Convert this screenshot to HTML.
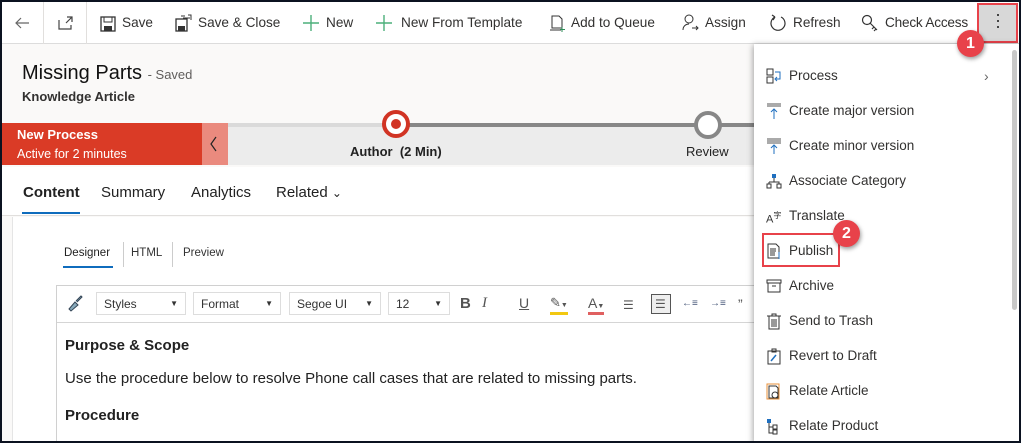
<!DOCTYPE html>
<html><head><style>
*{margin:0;padding:0;box-sizing:border-box}
body{width:1021px;height:443px;overflow:hidden;background:#0b1220;font-family:"Liberation Sans",sans-serif;position:relative}
.frame{position:absolute;left:2px;top:2px;right:2px;bottom:2px;background:#faf9f8;overflow:hidden}
.a{position:absolute;white-space:nowrap}
.tb{position:absolute;left:0;top:0;width:1017px;height:42px;background:#fff;border-bottom:1px solid #dcdcdc}
.tbt{position:absolute;top:13px;font-size:13.6px;color:#323130}
.mi{position:absolute;left:35px;font-size:13.5px;color:#323130}
.ic{position:absolute;left:12px}
.dd{position:absolute;top:290px;height:23px;border:1px solid #ddd;font-size:12px;padding:4px 7px;color:#333}
.dd span{position:absolute;right:7px;font-size:8px;top:6px}
</style></head><body>
<div class="frame">
<div class="tb">
 <div class="a" style="left:41px;top:0;width:1px;height:42px;background:#e1dfdd"></div>
 <div class="a" style="left:84px;top:0;width:1px;height:42px;background:#e1dfdd"></div>
 <svg class="a" style="left:12px;top:14px" width="16" height="14"><path d="M15 7H2M7 2L2 7l5 5" stroke="#666" fill="none" stroke-width="1.2"/></svg>
 <svg class="a" style="left:56px;top:14px" width="16" height="14"><path d="M1 4v9h12V9M9 1h5v5M14 1L8 7" stroke="#444" fill="none" stroke-width="1.2"/></svg>
 <svg class="a" style="left:98px;top:14px" width="16" height="16"><rect x="1" y="1" width="14" height="14" stroke="#333" fill="none" stroke-width="1.3"/><rect x="4" y="1" width="8" height="5" stroke="#333" fill="none"/><rect x="4" y="10" width="8" height="5" fill="#333"/></svg>
 <div class="tbt" style="left:120px">Save</div>
 <svg class="a" style="left:173px;top:12px" width="18" height="18"><rect x="1" y="5" width="11" height="12" stroke="#333" fill="none" stroke-width="1.3"/><rect x="3" y="12" width="7" height="5" fill="#333"/><path d="M6 2h4M13 1h3v5M8 4h7" stroke="#333" fill="none"/></svg>
 <div class="tbt" style="left:196px">Save &amp; Close</div>
 <svg class="a" style="left:301px;top:13px" width="16" height="16"><path d="M8 0v16M0 8h16" stroke="#4caf7a" stroke-width="1.4"/></svg>
 <div class="tbt" style="left:324px">New</div>
 <svg class="a" style="left:374px;top:13px" width="16" height="16"><path d="M8 0v16M0 8h16" stroke="#4caf7a" stroke-width="1.4"/></svg>
 <div class="tbt" style="left:399px">New From Template</div>
 <svg class="a" style="left:547px;top:13px" width="16" height="17"><path d="M3 1h7l3 3v9H3zM1 15h11" stroke="#333" fill="none"/><path d="M13 12v5M11 14.5h5" stroke="#2e8b57"/></svg>
 <div class="tbt" style="left:569px">Add to Queue</div>
 <svg class="a" style="left:680px;top:12px" width="18" height="18"><circle cx="7" cy="5" r="4" stroke="#333" fill="none"/><path d="M1 16c0-4 3-6 6-6M10 14h6M14 12l2 2-2 2" stroke="#333" fill="none"/></svg>
 <div class="tbt" style="left:703px">Assign</div>
 <svg class="a" style="left:767px;top:12px" width="18" height="18"><path d="M6 3A7 7 0 1 0 12 3M6 3L3 1M6 3L4 6" stroke="#333" fill="none" stroke-width="1.2"/></svg>
 <div class="tbt" style="left:791px">Refresh</div>
 <svg class="a" style="left:859px;top:12px" width="18" height="18"><circle cx="6" cy="6" r="4.5" stroke="#333" fill="none" stroke-width="1.2"/><path d="M9 9l7 7M13 13l-2 2M15 15l-2 2" stroke="#333" fill="none" stroke-width="1.2"/></svg>
 <div class="tbt" style="left:883px;letter-spacing:-0.2px">Check Access</div>
 <div class="a" style="left:975px;top:1px;width:41px;height:40px;background:#d8d8d8;border:2px solid #e8424a"></div>
 <div class="a" style="left:995px;top:12px;width:2px;height:2px;background:#444;box-shadow:0 6px #444,0 12px #444"></div>
</div>
<div class="a" style="left:20px;top:60px;font-size:20px;color:#111">Missing Parts <span style="font-size:13px;color:#605e5c">- Saved</span></div>
<div class="a" style="left:20px;top:87px;font-size:13px;color:#323130;font-weight:bold">Knowledge Article</div>
<div class="a" style="left:0;top:121px;width:200px;height:42px;background:#da3b26"></div>
<div class="a" style="left:15px;top:125px;font-size:13px;color:#fff;font-weight:bold">New Process</div>
<div class="a" style="left:15px;top:145px;font-size:12.5px;color:#fff">Active for 2 minutes</div>
<div class="a" style="left:200px;top:121px;width:26px;height:42px;background:#ea8a7e"></div>
<svg class="a" style="left:207px;top:134px" width="10" height="16"><path d="M7 1L2 8l5 7" stroke="#222" fill="none" stroke-width="1.2"/></svg>
<div class="a" style="left:226px;top:121px;width:800px;height:42px;background:#ececec"></div>
<div class="a" style="left:226px;top:121px;width:168px;height:4px;background:#dadada"></div>
<div class="a" style="left:394px;top:121px;width:400px;height:4px;background:#878787"></div>
<div class="a" style="left:380px;top:108px;width:28px;height:28px;border-radius:50%;background:#fff;border:4px solid #d13424"></div>
<div class="a" style="left:389px;top:117px;width:10px;height:10px;border-radius:50%;background:#d13424"></div>
<div class="a" style="left:692px;top:109px;width:28px;height:28px;border-radius:50%;background:#fff;border:4px solid #878787"></div>
<div class="a" style="left:348px;top:142px;font-size:13px;color:#222;font-weight:bold">Author&nbsp; (2 Min)</div>
<div class="a" style="left:684px;top:142px;font-size:13px;color:#222">Review</div>
<div class="a" style="left:0;top:165px;width:1017px;height:49px;background:#fff;border-bottom:1px solid #e1dfdd"></div>
<div class="a" style="left:21px;top:182px;font-size:15px;color:#222;font-weight:bold">Content</div>
<div class="a" style="left:20px;top:210px;width:58px;height:2px;background:#0f6cbd"></div>
<div class="a" style="left:99px;top:182px;font-size:15px;color:#222">Summary</div>
<div class="a" style="left:189px;top:182px;font-size:15px;color:#222">Analytics</div>
<div class="a" style="left:274px;top:182px;font-size:15px;color:#222">Related <span style="font-size:12px">&#8964;</span></div>
<div class="a" style="left:10px;top:215px;width:1010px;height:230px;background:#fff;border-left:1px solid #e5e5e5"></div>
<div class="a" style="left:62px;top:245px;font-size:11.5px;color:#222">Designer</div>
<div class="a" style="left:61px;top:264px;width:50px;height:2px;background:#0f6cbd"></div>
<div class="a" style="left:121px;top:240px;width:1px;height:25px;background:#ccc"></div>
<div class="a" style="left:129px;top:245px;font-size:11.5px;color:#333">HTML</div>
<div class="a" style="left:170px;top:240px;width:1px;height:25px;background:#ccc"></div>
<div class="a" style="left:181px;top:245px;font-size:11.5px;color:#333">Preview</div>
<div class="a" style="left:54px;top:283px;width:720px;height:160px;border:1px solid #d0d0d0"></div>
<div class="a" style="left:55px;top:284px;width:720px;height:37px;border-bottom:1px solid #d5d5d5"></div>
<svg class="a" style="left:64px;top:292px" width="18" height="18"><path d="M3 15l6-7 3 3-7 6zM10 7l5-5 1 1-5 5" stroke="#345" fill="#8ab" /></svg>
<div class="dd" style="left:94px;width:90px">Styles<span>&#9660;</span></div>
<div class="dd" style="left:191px;width:88px">Format<span>&#9660;</span></div>
<div class="dd" style="left:287px;width:92px">Segoe UI<span>&#9660;</span></div>
<div class="dd" style="left:386px;width:62px">12<span>&#9660;</span></div>
<div class="a" style="left:458px;top:293px;font-size:15px;font-weight:bold;color:#555">B</div>
<div class="a" style="left:480px;top:293px;font-size:15px;font-style:italic;color:#555;font-family:'Liberation Serif',serif">I</div>
<div class="a" style="left:517px;top:293px;font-size:14px;text-decoration:underline;color:#555">U</div>
<div class="a" style="left:548px;top:293px;font-size:13px;color:#555;border-bottom:3px solid #f2c811;height:20px">&#9998;<span style="font-size:7px">&#9660;</span></div>
<div class="a" style="left:586px;top:293px;font-size:14px;color:#555;border-bottom:3px solid #e06060;height:20px">A<span style="font-size:7px">&#9660;</span></div>
<div class="a" style="left:621px;top:296px;font-size:12px;color:#555">&#9776;</div>
<div class="a" style="left:649px;top:292px;width:20px;height:20px;border:1px solid #555;background:#eee;font-size:12px;padding:2px 3px;color:#555">&#9776;</div>
<div class="a" style="left:680px;top:296px;font-size:10px;color:#457">&#8592;&#8801;</div>
<div class="a" style="left:708px;top:296px;font-size:10px;color:#457">&#8594;&#8801;</div>
<div class="a" style="left:736px;top:294px;font-size:14px;color:#555">&#8221;</div>
<div class="a" style="left:63px;top:335px;font-size:15px;color:#222;font-weight:bold">Purpose &amp; Scope</div>
<div class="a" style="left:63px;top:368px;font-size:15px;color:#222">Use the procedure below to resolve Phone call cases that are related to missing parts.</div>
<div class="a" style="left:63px;top:405px;font-size:15px;color:#222;font-weight:bold">Procedure</div>

<div class="a" style="left:752px;top:42px;width:268px;height:400px;background:#fff;box-shadow:-1px 1px 6px rgba(0,0,0,.35)">
 <div class="a" style="left:258px;top:6px;width:5px;height:260px;border-radius:3px;background:#c8c8c8"></div>
 <div style="position:absolute;top:24px;left:0;width:250px;height:20px"><svg class="ic" width="16" height="16"><rect x="1" y="1" width="6" height="6" stroke="#333" fill="none"/><rect x="1" y="9" width="6" height="6" stroke="#333" fill="none"/><path d="M9 4h5v7h-4M11 9l-2 2 2 2" stroke="#1f6fbf" fill="none"/></svg><div class="mi">Process</div><div class="a" style="left:230px;top:0;font-size:14px;color:#666">&#8250;</div></div>
 <div style="position:absolute;top:59px;left:0;width:250px;height:20px"><svg class="ic" width="16" height="16"><path d="M1 1h14M1 3h14" stroke="#555"/><path d="M8 6v10M5 9l3-3 3 3" stroke="#1f6fbf" fill="none"/></svg><div class="mi">Create major version</div></div>
 <div style="position:absolute;top:94px;left:0;width:250px;height:20px"><svg class="ic" width="16" height="16"><path d="M1 1h14M1 3h14M1 5h14" stroke="#555"/><path d="M8 7v9M5 10l3-3 3 3" stroke="#1f6fbf" fill="none"/></svg><div class="mi">Create minor version</div></div>
 <div style="position:absolute;top:129px;left:0;width:250px;height:20px"><svg class="ic" width="16" height="16"><rect x="6" y="1" width="4" height="4" fill="#1f6fbf"/><path d="M8 5v4M3 9h10v2M3 9v2" stroke="#333" fill="none"/><rect x="1" y="11" width="4" height="4" stroke="#333" fill="none"/><rect x="11" y="11" width="4" height="4" stroke="#333" fill="none"/></svg><div class="mi">Associate Category</div></div>
 <div style="position:absolute;top:164px;left:0;width:250px;height:20px"><div class="ic" style="font-size:11px;color:#333;top:2px">A<sup style="font-size:8px">字</sup></div><div class="mi">Translate</div></div>
 <div style="position:absolute;top:199px;left:0;width:250px;height:20px"><svg class="ic" width="16" height="16"><path d="M2 1h8l3 3v11H2z" stroke="#333" fill="none"/><path d="M4 6h6M4 8h6M4 10h5M4 12h5" stroke="#333"/><path d="M13 9v7" stroke="#1f6fbf"/></svg><div class="mi">Publish</div></div>
 <div style="position:absolute;top:234px;left:0;width:250px;height:20px"><svg class="ic" width="16" height="16"><rect x="1" y="2" width="14" height="3" stroke="#333" fill="none"/><path d="M2 5v9h12V5M6 8h4" stroke="#333" fill="none"/></svg><div class="mi">Archive</div></div>
 <div style="position:absolute;top:269px;left:0;width:250px;height:20px"><svg class="ic" width="16" height="17"><path d="M1 3h14M6 3V1h4v2M3 3v13h10V3M6 6v8M8 6v8M10 6v8" stroke="#333" fill="none"/></svg><div class="mi">Send to Trash</div></div>
 <div style="position:absolute;top:304px;left:0;width:250px;height:20px"><svg class="ic" width="16" height="17"><path d="M2 3h12v13H2zM6 1h4v3H6z" stroke="#333" fill="none"/><path d="M5 13l5-6" stroke="#1f6fbf" stroke-width="1.5"/></svg><div class="mi">Revert to Draft</div></div>
 <div style="position:absolute;top:339px;left:0;width:250px;height:20px"><svg class="ic" width="16" height="17"><rect x="1" y="1" width="12" height="15" stroke="#e8903a" fill="none"/><path d="M3 3h7l2 2v10H3z" stroke="#333" fill="none"/><circle cx="9" cy="12" r="3" stroke="#333" fill="none"/></svg><div class="mi">Relate Article</div></div>
 <div style="position:absolute;top:374px;left:0;width:250px;height:20px"><svg class="ic" width="16" height="17"><rect x="1" y="1" width="4" height="4" fill="#1f6fbf"/><path d="M3 5v10h4M3 9h4" stroke="#333" fill="none"/><rect x="7" y="7" width="4" height="4" stroke="#333" fill="none"/><rect x="7" y="12" width="4" height="4" stroke="#333" fill="none"/></svg><div class="mi">Relate Product</div></div>
 <div class="a" style="left:8px;top:189px;width:78px;height:34px;border:2px solid #e8424a"></div>
</div>
<div class="a" style="left:955px;top:28px;width:27px;height:27px;border-radius:50%;background:#e8424a;color:#fff;font-weight:bold;font-size:16px;text-align:center;line-height:27px;box-shadow:1px 2px 4px rgba(0,0,0,.4)">1</div>
<div class="a" style="left:831px;top:218px;width:27px;height:27px;border-radius:50%;background:#e8424a;color:#fff;font-weight:bold;font-size:16px;text-align:center;line-height:27px;box-shadow:1px 2px 4px rgba(0,0,0,.4)">2</div>
</div>
</body></html>
